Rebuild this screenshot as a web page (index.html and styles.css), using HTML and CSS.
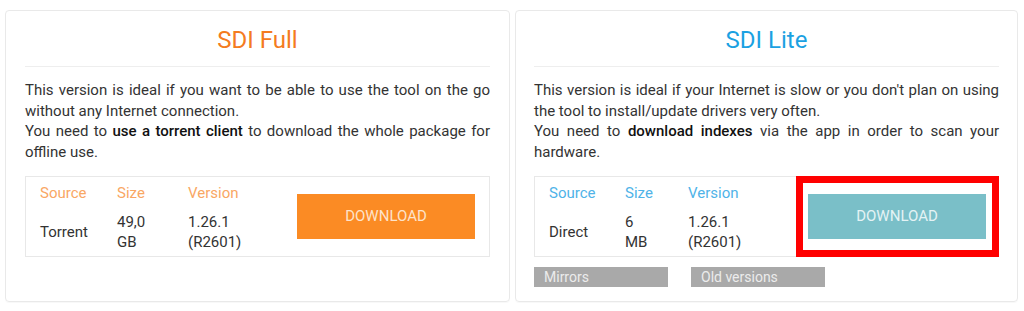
FILE: index.html
```html
<!DOCTYPE html>
<html lang="en">
<head>
  <meta charset="UTF-8" />
  <title>SDI Downloads</title>
  <link rel="stylesheet" href="styles.css">
</head>
<body>

  <div class="editions">

    <div class="card card-full">
      <h2>SDI Full</h2>
      <hr>
      <p>This version is ideal if you want to be able to use the tool on the go without any Internet connection.<br>
      You need to <b>use a torrent client</b> to download the whole package for offline use.</p>
      <div class="info">
        <span class="head">Source</span>
        <span class="head">Size</span>
        <span class="head">Version</span>
        <div class="btn-cell"><a class="download" href="#">DOWNLOAD</a></div>
        <span class="val">Torrent</span>
        <span class="val">49,0<br>GB</span>
        <span class="val">1.26.1<br>(R2601)</span>
      </div>
    </div>

    <div class="card card-lite">
      <h2>SDI Lite</h2>
      <hr>
      <p>This version is ideal if your Internet is slow or you don't plan on using the tool to install/update drivers very often.<br>
      You need to <b>download indexes</b> via the app in order to scan your hardware.</p>
      <div class="info">
        <span class="head">Source</span>
        <span class="head">Size</span>
        <span class="head">Version</span>
        <div class="btn-cell"><a class="download" href="#">DOWNLOAD</a></div>
        <span class="val">Direct</span>
        <span class="val">6<br>MB</span>
        <span class="val">1.26.1<br>(R2601)</span>
        <div class="highlight"></div>
      </div>
      <div class="extra">
        <a href="#">Mirrors</a>
        <a href="#">Old versions</a>
      </div>
    </div>

  </div>

</body>
</html>
```

FILE: styles.css
```css
* { margin: 0; padding: 0; box-sizing: border-box; }

body {
  font-family: Roboto, 'Liberation Sans', sans-serif;
  background: #fff;
  color: #333;
}

.editions {
  display: flex;
  gap: 5px;
  padding: 10px 6px 9px 5px;
}

.card {
  flex: 1;
  height: 292px;
  border: 1px solid #e9e9e9;
  border-radius: 4px;
  padding: 14px 19px 0;
  box-shadow: 0 1px 1px rgba(0,0,0,0.03);
}

.card-lite { padding: 14px 18px 0; }

h2 {
  font-size: 24px;
  font-weight: 400;
  line-height: 30px;
  text-align: center;
}

.card-full h2 { color: #f47b20; }
.card-lite h2 { color: #1ba1e2; }

hr {
  border: none;
  border-top: 1px solid #eee;
  margin: 11px 0 13px;
}

p {
  font-size: 15px;
  line-height: 20.7px;
  text-align: justify;
}

p b { font-weight: 500; color: #111; }

.info {
  position: relative;
  display: grid;
  grid-template-rows: 32px 47px;
  align-items: center;
  margin-top: 13px;
  border: 1px solid #e8e8e8;
  padding-left: 14px;
  font-size: 15px;
  line-height: 20px;
}

.card-full .info { grid-template-columns: 77px 71px 109px 1fr; }
.card-lite .info { grid-template-columns: 76px 63px 120px 1fr; }

.card-full .head { color: #f9a764; }
.card-lite .head { color: #4fb3e8; }

.val { color: #333; }

.btn-cell {
  grid-row: 1 / 3;
  grid-column: 4;
}

.download {
  display: block;
  width: 178px;
  height: 45px;
  line-height: 45px;
  text-align: center;
  font-size: 15px;
  text-decoration: none;
}

.card-full .download { background: #fb8b24; color: #fde3cb; }
.card-lite .download { background: #7abfc8; color: #e4f3f5; }

.highlight {
  position: absolute;
  top: -1px;
  bottom: -1px;
  right: -1px;
  width: 203px;
  border: 7px solid #f00;
}

.extra {
  display: flex;
  gap: 23px;
  margin-top: 10px;
}

.extra a {
  width: 134px;
  height: 20px;
  line-height: 20px;
  padding-left: 10px;
  background: #a9a9a9;
  color: #ececec;
  font-size: 14px;
  text-decoration: none;
}
```
